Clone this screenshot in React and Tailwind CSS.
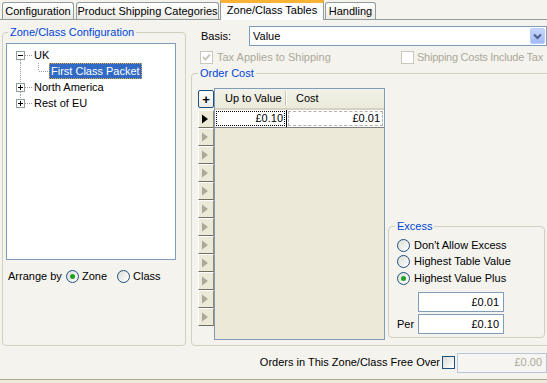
import React from 'react';

const TITLE = 'text-[#0046d5]';

function Tab({ label, active, className = '' }) {
  if (active) {
    return (
      <div
        className={`relative z-10 -mb-px flex h-[20px] items-start justify-center border border-b-0 border-[#919b9c] border-t-[3px] border-t-[#f9b233] bg-[#fcfcfe] pt-[1px] ${className}`}
      >
        {label}
      </div>
    );
  }
  return (
    <div
      className={`flex h-[17px] items-center justify-center rounded-t-[3px] border border-b-0 border-[#919b9c] bg-linear-to-b from-white to-[#ecebe6] pt-px ${className}`}
    >
      {label}
    </div>
  );
}

function Radio({ checked }) {
  return (
    <span className="flex h-[13px] w-[13px] shrink-0 items-center justify-center rounded-full border border-[#1c5180] bg-linear-to-br from-[#dcdcd7] to-white">
      {checked && <span className="h-[5px] w-[5px] rounded-full bg-[#21a121]" />}
    </span>
  );
}

function Checkbox({ checked, disabled }) {
  const box = disabled
    ? 'border-[#cac8bb] bg-white'
    : 'border-[#1c5180] bg-linear-to-br from-[#dcdcd7] to-white';
  return (
    <span className={`flex h-[13px] w-[13px] shrink-0 items-center justify-center border ${box}`}>
      {checked && (
        <svg width="9" height="9" viewBox="0 0 9 9">
          <path d="M1 4 L3.5 6.5 L8 1.5" fill="none" stroke={disabled ? '#cac8bb' : '#21a121'} strokeWidth="2" />
        </svg>
      )}
    </span>
  );
}

function Field({ value, className = '' }) {
  return (
    <div className={`flex h-[20px] w-[86px] items-center justify-end border border-[#7f9db9] bg-white pr-[4px] ${className}`}>
      {value}
    </div>
  );
}

const DOT = { stroke: '#a0a0a0', strokeDasharray: '1 1' };

function Expander({ open }) {
  return (
    <g>
      <rect x="9.5" y="4.5" width="8" height="8" fill="#fff" stroke="#919b9c" />
      <line x1="11" y1="8.5" x2="16" y2="8.5" stroke="#000" />
      {!open && <line x1="13.5" y1="6" x2="13.5" y2="11" stroke="#000" />}
    </g>
  );
}

function TreeRow({ kind, children }) {
  const child = kind === 'child';
  return (
    <div className="flex h-[16px] items-center">
      <svg width={child ? 42 : 26} height="16" className="shrink-0">
        {child ? (
          <>
            <line x1="13.5" y1="0" x2="13.5" y2="16" {...DOT} />
            <line x1="31.5" y1="0" x2="31.5" y2="8" {...DOT} />
            <line x1="32" y1="8.5" x2="42" y2="8.5" {...DOT} />
          </>
        ) : (
          <>
            {kind !== 'first' && <line x1="13.5" y1="0" x2="13.5" y2="4" {...DOT} />}
            {kind !== 'last' && <line x1="13.5" y1="13" x2="13.5" y2="16" {...DOT} />}
            <line x1="18" y1="8.5" x2="25" y2="8.5" {...DOT} />
            <Expander open={kind === 'first'} />
          </>
        )}
      </svg>
      {children}
    </div>
  );
}

function Indicator({ active }) {
  return (
    <div className="h-[18px] w-[16px] border-t border-l border-t-white border-l-white border-r border-b border-r-[#8d8a7c] border-b-[#716f64] bg-[#ece9d8]">
      <svg width="14" height="16" viewBox="0 0 14 16">
        <polygon points="3,3.5 3,12.5 9,8" fill={active ? '#000' : '#aca899'} />
      </svg>
    </div>
  );
}

export default function App() {
  return (
    <div className="flex h-[383px] w-[547px] flex-col overflow-hidden bg-[#f4f3ee] font-['Liberation_Sans',Arial,sans-serif] text-[11px] leading-[13px] text-black">
      {/* tab strip */}
      <div className="flex h-[20px] shrink-0 items-end border-b border-[#919b9c] pl-[2px]">
        <Tab label="Configuration" className="w-[72px]" />
        <Tab label="Product Shipping Categories" className="ml-[2px] w-[143px]" />
        <Tab label="Zone/Class Tables" active className="ml-px w-[104px]" />
        <Tab label="Handling" className="ml-px w-[51px]" />
      </div>

      <div className="flex h-[326px] shrink-0">
        {/* left group */}
        <fieldset className="ml-[2px] mt-[6px] h-[320px] w-[184px] shrink-0 rounded-[4px] border border-[#d0d0bf] pl-[3px]">
          <legend className={`ml-[2px] px-[2px] ${TITLE}`}>Zone/Class Configuration</legend>
          <div className="mt-[4px] h-[217px] w-[170px] border border-[#7f9db9] bg-white pt-[3px]">
            <TreeRow kind="first">
              <span className="ml-px">UK</span>
            </TreeRow>
            <TreeRow kind="child">
              <span className="flex h-[16px] items-center border border-dotted border-[#e3a53a] bg-[#316ac5] px-[1px] text-white">
                First Class Packet
              </span>
            </TreeRow>
            <TreeRow kind="mid">
              <span className="ml-px">North America</span>
            </TreeRow>
            <TreeRow kind="last">
              <span className="ml-px">Rest of EU</span>
            </TreeRow>
          </div>
          <div className="mt-[8px] flex h-[16px] items-center pl-[2px]">
            <span className="w-[58px]">Arrange by</span>
            <div className="flex w-[51px] items-center gap-[3px]">
              <Radio checked />
              <span>Zone</span>
            </div>
            <div className="flex items-center gap-[3px]">
              <Radio />
              <span>Class</span>
            </div>
          </div>
        </fieldset>

        {/* right side */}
        <div className="ml-[5px] flex w-[362px] shrink-0 flex-col">
          <div className="mt-[6px] flex h-[20px] items-center pl-[10px]">
            <span className="w-[48px]">Basis:</span>
            <div className="flex h-[20px] w-[298px] items-center border border-[#7f9db9] bg-white pl-[3px]">
              <span className="flex-1">Value</span>
              <span className="mr-px flex h-[16px] w-[15px] items-center justify-center rounded-[2px] border border-[#b9cdf6] bg-linear-to-b from-[#c6d6fc] to-[#a2bbf5]">
                <svg width="9" height="7" viewBox="0 0 9 7">
                  <path d="M1 1.5 L4.5 5 L8 1.5" fill="none" stroke="#4d6185" strokeWidth="2" />
                </svg>
              </span>
            </div>
          </div>

          <div className="mt-[5px] flex h-[13px] items-center pl-[9px] text-[#aca899]">
            <div className="flex w-[201px] items-center gap-[4px]">
              <Checkbox checked disabled />
              <span>Tax Applies to Shipping</span>
            </div>
            <div className="flex items-center gap-[3px] whitespace-nowrap">
              <Checkbox disabled />
              <span className="tracking-[-0.25px]">Shipping Costs Include Tax</span>
            </div>
          </div>

          <fieldset className="mt-[3px] h-[279px] w-[362px] rounded-[4px] border border-[#d0d0bf] pl-[6px]">
            <legend className={`px-[2px] ${TITLE}`}>Order Cost</legend>
            <div className="mt-[8px] flex h-[252px] items-start">
              {/* row indicators */}
              <div className="flex w-[16px] shrink-0 flex-col pt-[2px]">
                <div className="flex h-[18px] w-[16px] items-center justify-center rounded-[2px] border border-[#1c5180] bg-linear-to-b from-white to-[#ecebe6] text-[13px] font-bold">
                  +
                </div>
                <div className="mt-[2px] flex flex-col">
                  {Array.from({ length: 12 }).map((_, i) => (
                    <Indicator key={i} active={i === 0} />
                  ))}
                </div>
              </div>

              {/* grid */}
              <div className="flex h-[252px] w-[171px] shrink-0 flex-col border border-[#7f9db9] bg-[#ece9d8]">
                <div className="flex h-[21px] items-center border-b-2 border-[#d6d2c2] bg-linear-to-b from-[#f3f2ea] to-[#ebeadb]">
                  <span className="w-[70px] pl-[10px]">Up to Value</span>
                  <span className="h-[15px] w-px bg-[#c7c5b2]" />
                  <span className="h-[15px] w-px bg-white" />
                  <span className="pl-[9px]">Cost</span>
                </div>
                <div className="flex h-[18px] border-b border-[#808080] bg-white">
                  <div className="w-[71px] p-px">
                    <div className="flex h-full items-center justify-end border border-dotted border-black pr-px">£0.10</div>
                  </div>
                  <span className="w-px bg-black" />
                  <div className="flex-1 p-px">
                    <div className="flex h-full items-center justify-end border border-dashed border-[#b0b0b0] pr-[2px]">£0.01</div>
                  </div>
                </div>
              </div>

              {/* excess */}
              <fieldset className="mb-[2px] ml-[3px] h-[118px] w-[157px] shrink-0 self-end rounded-[4px] border border-[#d0d0bf] pl-[6px]">
                <legend className={`px-[2px] ${TITLE}`}>Excess</legend>
                <div className="ml-[2px] mt-[4px] flex flex-col">
                  <div className="flex h-[16px] items-center gap-[4px]">
                    <Radio />
                    <span>Don't Allow Excess</span>
                  </div>
                  <div className="flex h-[16px] items-center gap-[4px]">
                    <Radio />
                    <span>Highest Table Value</span>
                  </div>
                  <div className="mt-px flex h-[17px] items-center gap-[4px]">
                    <Radio checked />
                    <span>Highest Value Plus</span>
                  </div>
                  <div className="mt-[5px] flex items-center">
                    <span className="w-[21px]" />
                    <Field value="£0.01" />
                  </div>
                  <div className="mt-[2px] flex items-center">
                    <span className="w-[21px]">Per</span>
                    <Field value="£0.10" />
                  </div>
                </div>
              </fieldset>
            </div>
          </fieldset>
        </div>
      </div>

      {/* bottom row */}
      <div className="flex h-[33px] shrink-0 items-center justify-end gap-[2px] whitespace-nowrap">
        <span>Orders in This Zone/Class Free Over</span>
        <Checkbox />
        <div className="flex h-[20px] w-[90px] items-center justify-end border border-[#b9c6d8] bg-[#f6f5f1] pr-[4px] text-[#aca899]">
          £0.00
        </div>
      </div>
      <div className="flex-1 border-t border-[#aca899] bg-[#ece9d8]" />
    </div>
  );
}
